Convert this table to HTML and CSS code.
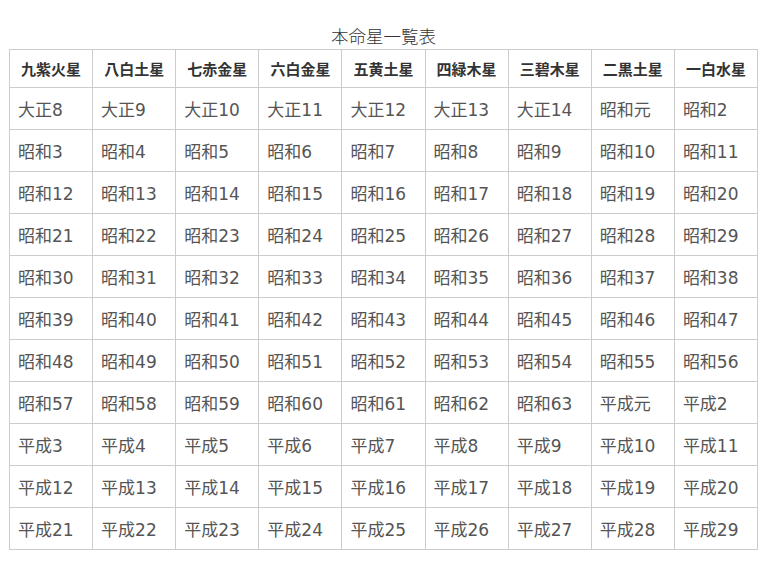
FILE: index.html
```html
<!DOCTYPE html>
<html lang="ja">
<head>
<meta charset="utf-8">
<link rel="stylesheet" href="styles.css">
</head>
<body>
<div class="wrap">
<table class="stars">
<caption>本命星一覧表</caption>
<thead>
<tr><th>九紫火星</th><th>八白土星</th><th>七赤金星</th><th>六白金星</th><th>五黄土星</th><th>四緑木星</th><th>三碧木星</th><th>二黒土星</th><th>一白水星</th></tr>
</thead>
<tbody>
<tr><td>大正8</td><td>大正9</td><td>大正10</td><td>大正11</td><td>大正12</td><td>大正13</td><td>大正14</td><td>昭和元</td><td>昭和2</td></tr>
<tr><td>昭和3</td><td>昭和4</td><td>昭和5</td><td>昭和6</td><td>昭和7</td><td>昭和8</td><td>昭和9</td><td>昭和10</td><td>昭和11</td></tr>
<tr><td>昭和12</td><td>昭和13</td><td>昭和14</td><td>昭和15</td><td>昭和16</td><td>昭和17</td><td>昭和18</td><td>昭和19</td><td>昭和20</td></tr>
<tr><td>昭和21</td><td>昭和22</td><td>昭和23</td><td>昭和24</td><td>昭和25</td><td>昭和26</td><td>昭和27</td><td>昭和28</td><td>昭和29</td></tr>
<tr><td>昭和30</td><td>昭和31</td><td>昭和32</td><td>昭和33</td><td>昭和34</td><td>昭和35</td><td>昭和36</td><td>昭和37</td><td>昭和38</td></tr>
<tr><td>昭和39</td><td>昭和40</td><td>昭和41</td><td>昭和42</td><td>昭和43</td><td>昭和44</td><td>昭和45</td><td>昭和46</td><td>昭和47</td></tr>
<tr><td>昭和48</td><td>昭和49</td><td>昭和50</td><td>昭和51</td><td>昭和52</td><td>昭和53</td><td>昭和54</td><td>昭和55</td><td>昭和56</td></tr>
<tr><td>昭和57</td><td>昭和58</td><td>昭和59</td><td>昭和60</td><td>昭和61</td><td>昭和62</td><td>昭和63</td><td>平成元</td><td>平成2</td></tr>
<tr><td>平成3</td><td>平成4</td><td>平成5</td><td>平成6</td><td>平成7</td><td>平成8</td><td>平成9</td><td>平成10</td><td>平成11</td></tr>
<tr><td>平成12</td><td>平成13</td><td>平成14</td><td>平成15</td><td>平成16</td><td>平成17</td><td>平成18</td><td>平成19</td><td>平成20</td></tr>
<tr><td>平成21</td><td>平成22</td><td>平成23</td><td>平成24</td><td>平成25</td><td>平成26</td><td>平成27</td><td>平成28</td><td>平成29</td></tr>
</tbody>
</table>
</div>
</body>
</html>
```

FILE: styles.css
```css
html, body {
  margin: 0;
  padding: 0;
  background: #fff;
}
body {
  font-family: "Noto Sans CJK JP", "Noto Sans", sans-serif;
  color: #444;
}
.wrap {
  padding: 23px 0 0 9px;
}
.stars {
  width: 749px;
  table-layout: fixed;
  border-collapse: collapse;
}
.stars caption {
  font-size: 17.5px;
  line-height: 25px;
  font-weight: 300;
  color: #333;
  padding-bottom: 1px;
}
.stars th,
.stars td {
  border: 1px solid #ccc;
  padding: 0 0 0 8px;
  text-align: left;
}
.stars th {
  height: 37px;
  font-size: 15px;
  font-weight: bold;
  text-align: center;
  padding: 0;
  color: #333;
}
.stars td {
  height: 41px;
  font-family: "DejaVu Sans", "Noto Sans CJK JP", sans-serif;
  font-size: 17px;
  font-weight: normal;
  color: #555;
}
```
